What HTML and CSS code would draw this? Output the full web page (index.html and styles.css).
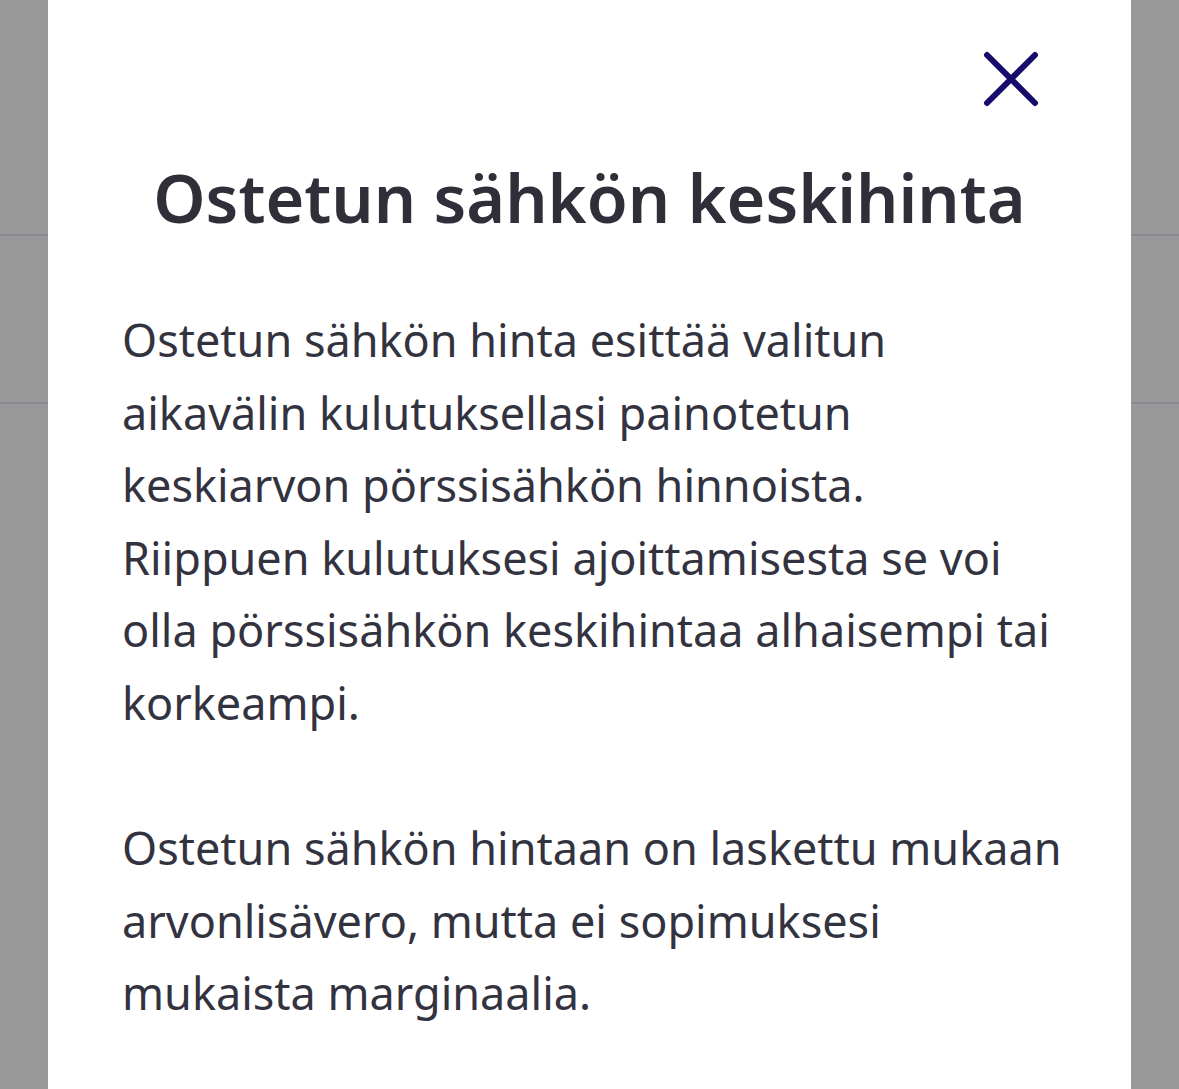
FILE: index.html
```html
<!DOCTYPE html>
<html lang="fi">
<head>
<meta charset="utf-8">
<title>Ostetun sähkön keskihinta</title>
<link rel="stylesheet" href="styles.css">
</head>
<body>
<div class="page">
  <div class="row row-top"></div>
  <div class="row row-mid"></div>
  <div class="row row-rest"></div>
</div>
<div class="modal" role="dialog" aria-labelledby="modal-title">
  <div class="modal-head">
    <button class="close" aria-label="Sulje">
      <svg width="56" height="56" viewBox="0 0 56 56" aria-hidden="true">
        <path d="M4 4 L52 52 M52 4 L4 52" stroke="#170b6b" stroke-width="6" stroke-linecap="round" fill="none"/>
      </svg>
    </button>
  </div>
  <h1 id="modal-title" class="title">Ostetun sähkön keskihinta</h1>
  <div class="content">
    <p>Ostetun sähkön hinta esittää valitun aikavälin kulutuksellasi painotetun keskiarvon pörssisähkön hinnoista. Riippuen kulutuksesi ajoittamisesta se voi olla pörssisähkön keskihintaa alhaisempi tai korkeampi.</p>
    <p>Ostetun sähkön hintaan on laskettu mukaan arvonlisävero, mutta ei sopimuksesi mukaista marginaalia.</p>
  </div>
</div>
</body>
</html>
```
FILE: styles.css
```css
html, body {
  margin: 0;
  padding: 0;
  height: 100%;
}
body {
  background: #999999;
  overflow: hidden;
  font-family: "Noto Sans", sans-serif;
}
.page {
  display: flex;
  flex-direction: column;
}
.row {
  border-bottom: 2px solid #8a8a93;
}
.row-top { height: 234px; }
.row-mid { height: 166px; }
.row-rest { height: 700px; border-bottom: none; }

.modal {
  position: absolute;
  top: 0;
  bottom: 0;
  left: 48px;
  right: 48px;
  background: #ffffff;
  padding: 51px 0 0 74px;
  box-sizing: border-box;
}
.modal-head {
  display: flex;
  justify-content: flex-end;
  padding-right: 92px;
}
.close {
  background: none;
  border: 0;
  padding: 0;
  margin: 0;
  width: 56px;
  height: 56px;
  cursor: pointer;
  display: block;
}
.close svg { display: block; }
.title {
  margin: 48px 0 0 -74px;
  text-align: center;
  font-size: 66.5px;
  font-weight: 600;
  line-height: 84px;
  color: #2f2f3a;
}
.content {
  margin-top: 65px;
  width: 940px;
  color: #33333f;
  font-size: 45px;
  line-height: 72.6px;
}
.content p {
  margin: 0 0 72.6px 0;
}
```
